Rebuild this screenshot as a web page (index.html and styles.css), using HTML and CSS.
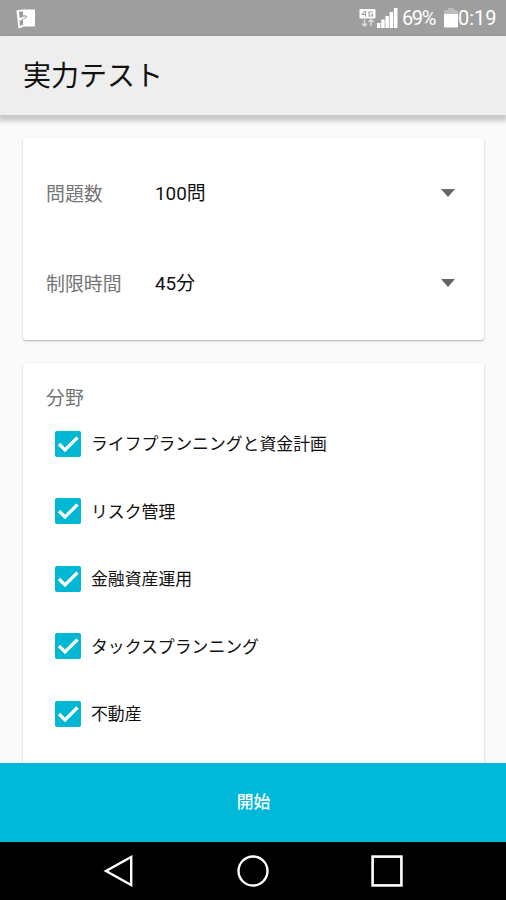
FILE: index.html
```html
<!DOCTYPE html>
<html lang="ja">
<head>
<meta charset="utf-8">
<title>実力テスト</title>
<link rel="stylesheet" href="styles.css">
</head>
<body>
<div class="status-bar">
  <svg class="status-app" width="22" height="22" viewBox="0 0 22 22">
    <path d="M7 1.500h13v17H9.500L3.500 20.500 1.500 2.500z" fill="#fff"/>
    <path d="M4 3.500h4v4q3.500-1 4 1.500-.5 2.500-4 2v5.500L5 18z" fill="#999"/>
    <path d="M3 9l3 .8 2.500-1.300q2.200-.4 2.500.7-.8 1.300-2.500 1L6 12.500l-2.500-.5z" fill="#fff"/>
  </svg>
  <div class="status-info">
    <svg class="status-net" width="17" height="20" viewBox="0 0 17 20">
      <rect x="0.500" y="1" width="16" height="9.500" rx="1" fill="#fff"/>
      <path d="M6 3L3 6.500h4M6.500 3v5.500M13.500 4h-3.500v4h3.500V6.300h-1.500" fill="none" stroke="#a0a0a0" stroke-width="1.100"/>
      <path d="M3 15.500l2.500 2.500L8 15.500M5.500 11.500v6M9.500 14l2.500-2.500 2.500 2.500M12 12v6" fill="none" stroke="#ddd" stroke-width="1.500"/>
    </svg>
    <svg class="status-signal" width="21" height="20" viewBox="0 0 21 20">
      <path d="M0 15h3.500v5H0zM4.200 11.500h3.500V20H4.200zM8.400 8h3.500v12H8.400zM12.600 4h3.500v16h-3.500zM16.800 0h3.700v20h-3.700z" fill="#fff"/>
    </svg>
    <span class="status-percent">69%</span>
    <svg class="status-battery" width="14" height="20" viewBox="0 0 14 20">
      <path d="M4 0h6v2h2.500q1.500 0 1.500 1.500V7H0V3.500Q0 2 1.500 2H4z" fill="#bdbdbd"/>
      <path d="M0 6h14v12.500q0 1-1 1H1q-1 0-1-1z" fill="#fff"/>
    </svg>
    <span class="status-time">0:19</span>
  </div>
</div>
<header class="app-bar"><h1 class="app-title">実力テスト</h1></header>
<main class="content">
  <section class="card settings">
    <div class="setting"><span class="setting-label">問題数</span><span class="setting-value">100問</span><svg class="caret" width="14" height="8" viewBox="0 0 14 8"><path d="M0 0h14L7 8z" fill="#666"/></svg></div>
    <div class="setting"><span class="setting-label">制限時間</span><span class="setting-value">45分</span><svg class="caret" width="14" height="8" viewBox="0 0 14 8"><path d="M0 0h14L7 8z" fill="#666"/></svg></div>
  </section>
  <section class="card fields">
    <h2 class="fields-title">分野</h2>
    <ul class="field-list">
      <li class="field"><svg class="check" viewBox="0 0 26 26"><rect width="26" height="26" rx="2" fill="#00b8d4"/><path d="M4 13l6 6L22.500 6.500" fill="none" stroke="#fff" stroke-width="3.200"/></svg><span class="field-name">ライフプランニングと資金計画</span></li>
      <li class="field"><svg class="check" viewBox="0 0 26 26"><rect width="26" height="26" rx="2" fill="#00b8d4"/><path d="M4 13l6 6L22.500 6.500" fill="none" stroke="#fff" stroke-width="3.200"/></svg><span class="field-name">リスク管理</span></li>
      <li class="field"><svg class="check" viewBox="0 0 26 26"><rect width="26" height="26" rx="2" fill="#00b8d4"/><path d="M4 13l6 6L22.500 6.500" fill="none" stroke="#fff" stroke-width="3.200"/></svg><span class="field-name">金融資産運用</span></li>
      <li class="field"><svg class="check" viewBox="0 0 26 26"><rect width="26" height="26" rx="2" fill="#00b8d4"/><path d="M4 13l6 6L22.500 6.500" fill="none" stroke="#fff" stroke-width="3.200"/></svg><span class="field-name">タックスプランニング</span></li>
      <li class="field"><svg class="check" viewBox="0 0 26 26"><rect width="26" height="26" rx="2" fill="#00b8d4"/><path d="M4 13l6 6L22.500 6.500" fill="none" stroke="#fff" stroke-width="3.200"/></svg><span class="field-name">不動産</span></li>
    </ul>
  </section>
</main>
<button class="start" type="button">開始</button>
<nav class="nav-bar">
  <svg width="32" height="32" viewBox="0 0 32 32"><path d="M28.200 2v28L3 16z" fill="none" stroke="#fff" stroke-width="2.400"/></svg>
  <svg width="32" height="32" viewBox="0 0 32 32"><circle cx="16" cy="16" r="14.500" fill="none" stroke="#fff" stroke-width="2.400"/></svg>
  <svg width="32" height="32" viewBox="0 0 32 32"><rect x="1.600" y="1.600" width="28.800" height="28.800" fill="none" stroke="#fff" stroke-width="2.600"/></svg>
</nav>
</body>
</html>
```
FILE: styles.css
```css
* { box-sizing: border-box; }
body {
  margin: 0;
  width: 506px;
  height: 900px;
  overflow: hidden;
  display: flex;
  flex-direction: column;
  background: #fafafa;
  color: #111;
  font-family: Roboto, "Noto Sans CJK JP", sans-serif;
}
svg { display: block; flex: none; }
.status-bar {
  flex: none;
  height: 36px;
  padding: 0 9px 0 15px;
  display: flex;
  align-items: center;
  justify-content: space-between;
  background: #9e9e9e;
  color: #fff;
}
.status-info { display: flex; align-items: center; }
.status-net { margin-right: -1px; }
.status-signal { margin: 0 4px 0 2px; }
.status-percent, .status-time {
  font: 20px/36px Roboto, sans-serif;
  white-space: nowrap;
}
.status-percent { width: 41px; margin-right: 1px; letter-spacing: -1.400px; }
.status-time { width: 39px; }
.status-app { margin-top: 1px; }
.app-bar {
  flex: none;
  position: relative;
  height: 79px;
  padding: 2px 23px 0;
  display: flex;
  align-items: center;
  background: #eee;
  box-shadow: 0 4px 5px 2px rgba(0, 0, 0, .2);
}
.app-title { margin: 0; font-size: 28px; line-height: 40px; font-weight: 400; }
.content {
  flex: 1;
  min-height: 0;
  overflow: hidden;
  padding: 23px 22px 0 23px;
  display: flex;
  flex-direction: column;
  gap: 23px;
}
.card {
  background: #fff;
  border-radius: 3px;
  box-shadow: 0 1px 2px rgba(0, 0, 0, .3);
}
.settings { flex: none; height: 202px; padding: 10px 29px 0 23px; }
.setting { height: 90px; display: flex; align-items: center; font-size: 18.900px; }
.setting-label { width: 109px; padding-bottom: 1px; color: #757575; }
.setting-value { flex: 1; padding-bottom: 3px; }
.fields { flex: none; height: 440px; padding: 22px 23px; }
.fields-title { margin: 0; font-size: 18.900px; line-height: 28px; font-weight: 400; color: #757575; }
.field-list { list-style: none; margin: 0; padding: 0 0 0 9px; }
.field {
  height: 67.500px;
  display: flex;
  align-items: center;
  gap: 10px;
  font-size: 16.850px;
}
.field:first-child { margin-top: -3px; }
.field-name { padding-bottom: 2px; }
.check { width: 26px; height: 26px; }
.start {
  flex: none;
  height: 79px;
  border: 0;
  padding: 0 0 1px 1px;
  background: #00b8d8;
  color: #fff;
  font: 500 16.800px/24px Roboto, "Noto Sans CJK JP", sans-serif;
}
.nav-bar {
  flex: none;
  height: 58px;
  display: flex;
  justify-content: center;
  align-items: center;
  gap: 102px;
  background: #000;
}
```
